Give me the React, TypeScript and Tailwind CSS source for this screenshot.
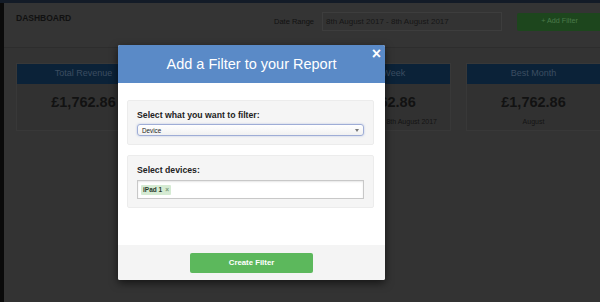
const cards = [
  { title: "Total Revenue", value: "£1,762.86", sub: "" },
  { title: "Weekly", value: "£1,762.86", sub: "" },
  { title: "Best Week", value: "£1,762.86", sub: "1st August 2017 - 8th August 2017" },
  { title: "Best Month", value: "£1,762.86", sub: "August" },
];

function StatCard({ title, value, sub }: { title: string; value: string; sub: string }) {
  return (
    <div className="w-[135px] shrink-0 border border-[#383838] bg-[#313131]">
      <div className="flex h-[20px] items-center justify-center bg-[#0b2238] text-[9px] text-[#3b4d61]">
        {title}
      </div>
      <div className="flex h-[46px] flex-col items-center pt-[9px]">
        <p className="text-[14.5px] font-bold leading-[18px] text-[#121212]">{value}</p>
        {sub && (
          <p className="mt-[6px] whitespace-nowrap text-[7px] leading-[9px] text-[#141414]">{sub}</p>
        )}
      </div>
    </div>
  );
}

export default function App() {
  return (
    <div className="relative h-[302px] w-[600px] overflow-hidden bg-[#333333] font-['Liberation_Sans',Arial,sans-serif]">
      <div className="h-[3px] bg-[#131b27]" />
      <div className="flex h-[299px]">
        <aside className="w-[4px] shrink-0 bg-[#0a0a0a]" />
        <main className="flex min-w-0 flex-1 flex-col">
          <header className="flex h-[45px] shrink-0 items-start border-b border-[#2d2d2d] bg-[#343434] pl-[12px] pt-[9px]">
            <h1 className="mt-[1px] text-[8.5px] font-bold leading-[10px] text-[#111]">DASHBOARD</h1>
            <div className="-mr-[2px] ml-auto flex items-center">
              <span className="mr-[8px] text-[7.5px] leading-[19px] text-[#111]">Date Range</span>
              <div className="h-[19px] w-[180px] border border-[#3d3d3d] bg-[#333] pl-[3px] text-[8px] leading-[17px] text-[#161616]">
                8th August 2017 - 8th August 2017
              </div>
              <button className="ml-[15px] h-[18px] w-[85px] rounded-[2px] bg-[#1d461d] text-[7.2px] text-[#4a7a4a]">
                + Add Filter
              </button>
            </div>
          </header>
          <section className="flex gap-[15px] pl-[12px] pt-[15px]">
            {cards.map((c) => (
              <StatCard key={c.title} {...c} />
            ))}
          </section>
        </main>
      </div>

      {/* modal */}
      <div className="absolute left-[118px] top-[45px] flex h-[235px] w-[267px] flex-col overflow-hidden rounded-[2px] bg-white shadow-[0_3px_8px_rgba(0,0,0,0.6)]">
        <div className="relative flex h-[38px] shrink-0 items-center justify-center bg-[#5a8ac7]">
          <h2 className="text-[14.5px] leading-[18px] text-white">Add a Filter to your Report</h2>
          <button className="absolute right-[4px] top-[1px] text-[16px] font-bold leading-[16px] text-white">×</button>
        </div>
        <div className="flex flex-1 flex-col gap-[10px] pl-[9px] pr-[11px] pt-[17px]">
          <div className="h-[45px] rounded-[2px] border border-[#ececec] bg-[#f5f5f5] px-[9px] pt-[9px]">
            <p className="text-[8.7px] font-bold leading-[11px] text-[#222]">Select what you want to filter:</p>
            <div className="mt-[3px] flex h-[12px] items-center justify-between rounded-[3px] border border-[#9fadd6] bg-gradient-to-b from-white to-[#f1f1f1] pl-[4px] pr-[4px] shadow-[0_0_2px_rgba(110,140,210,0.5)]">
              <span className="text-[6.3px] leading-[9px] text-[#222]">Device</span>
              <svg width="4" height="3" viewBox="0 0 4 3" className="text-[#777]">
                <path d="M0 0h4L2 3z" fill="currentColor" />
              </svg>
            </div>
          </div>
          <div className="h-[53px] rounded-[2px] border border-[#ececec] bg-[#f5f5f5] px-[9px] pt-[9px]">
            <p className="text-[8.7px] font-bold leading-[11px] text-[#222]">Select devices:</p>
            <div className="mt-[4px] flex h-[19px] items-center border border-[#c8c8c8] bg-white pl-[3px] shadow-[inset_0_1px_2px_rgba(0,0,0,0.1)]">
              <span className="flex h-[10px] items-center gap-[3px] rounded-[1px] bg-[#d5ebd3] px-[2px] text-[6.5px] font-bold leading-[10px] text-[#2b3a2b]">
                iPad 1 <span className="text-[6.5px] text-[#7a9a78]">×</span>
              </span>
            </div>
          </div>
        </div>
        <div className="flex h-[35px] shrink-0 items-center justify-center bg-[#f4f4f4]">
          <button className="h-[20px] w-[123px] rounded-[2px] bg-[#5cb85c] text-[7.8px] font-bold text-white">
            Create Filter
          </button>
        </div>
      </div>
    </div>
  );
}
